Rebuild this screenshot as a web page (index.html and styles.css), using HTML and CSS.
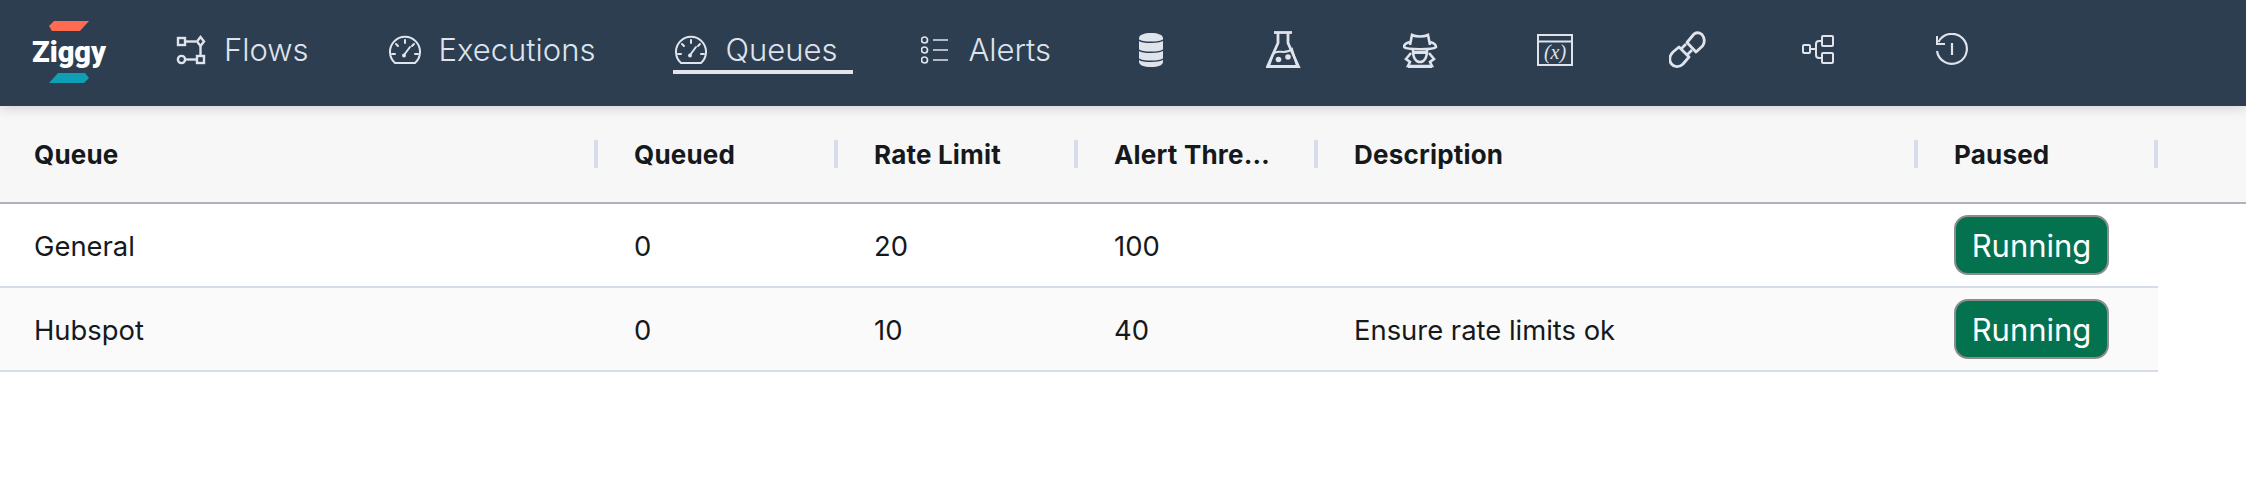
FILE: index.html
```html
<!DOCTYPE html>
<html lang="en">
<head>
<meta charset="utf-8">
<title>Ziggy Queues</title>
<link rel="stylesheet" href="styles.css">
</head>
<body>
<nav class="nav">
  <a class="logo">
    <svg class="logo-bar" width="40" height="10" viewBox="0 0 40 10"><path d="M5 0H40L31 10H3L0 5Z" fill="#ff6a50"/></svg>
    <span class="logo-text">Ziggy</span>
    <svg class="logo-bar" width="40" height="10" viewBox="0 0 40 10"><path d="M9 0H36L40 5L35 10H0Z" fill="#0e9fb5"/></svg>
  </a>
  <ul class="menu">
    <li class="item">
      <svg class="ico" width="31" height="30" viewBox="0 0 31 30"><g fill="none" stroke="#dfe3ec" stroke-width="2.400"><rect x="2" y="3" width="7" height="7"/><path d="M9 6.500H20"/><path d="M24.500 2L28 6.500L24.500 11L21 6.500Z"/><path d="M24.500 11V21"/><rect x="21" y="21" width="7" height="7"/><circle cx="5.500" cy="24.500" r="3.600"/><path d="M9 24.500H21"/></g></svg>
      <span class="label">Flows</span>
    </li>
    <li class="item">
      <svg class="ico" width="33" height="30" viewBox="0 0 33 30"><g fill="none" stroke="#dfe3ec" stroke-width="2"><path d="M6 28A15 15 0 1 1 26 28Z"/><path d="M16 5V8M7 9L9 11M3 19H6M26 19H29M25 9L23 11M15 20L21 12" stroke-linecap="round"/></g><circle cx="15" cy="20.500" r="2" fill="#dfe3ec"/></svg>
      <span class="label">Executions</span>
    </li>
    <li class="item active">
      <svg class="ico" width="33" height="30" viewBox="0 0 33 30"><g fill="none" stroke="#dfe3ec" stroke-width="2"><path d="M6 28A15 15 0 1 1 26 28Z"/><path d="M16 5V8M7 9L9 11M3 19H6M26 19H29M25 9L23 11M15 20L21 12" stroke-linecap="round"/></g><circle cx="15" cy="20.500" r="2" fill="#dfe3ec"/></svg>
      <span class="label">Queues</span>
    </li>
    <li class="item">
      <svg class="ico" width="30" height="30" viewBox="0 0 30 30"><g fill="none" stroke="#dfe3ec" stroke-width="1.700"><circle cx="3.500" cy="5" r="3"/><circle cx="3.500" cy="15" r="3"/><circle cx="3.500" cy="25" r="3"/><path d="M12 5H27M12 15H27M12 25H27"/></g></svg>
      <span class="label">Alerts</span>
    </li>
    <li class="item icon-only first">
      <svg width="31" height="36" viewBox="0 0 31 36"><path d="M0 6C0 3 5 1 12 1S24 3 24 6V30C24 33 19 35 12 35S0 33 0 30Z" fill="#dfe3ec"/><path d="M0 8C3 11 21 11 24 8M0 18C3 21 21 21 24 18M0 27C3 30 21 30 24 27" fill="none" stroke="#2c3e50" stroke-width="1.600"/></svg>
    </li>
    <li class="item icon-only">
      <svg width="41" height="38" viewBox="0 0 41 38"><g fill="none" stroke="#dfe3ec" stroke-width="2.800"><path d="M8 1.500H26"/><path d="M12 2V12L1.500 35.500H32.500L22 12V2"/></g><path d="M7 23C12 17 18 25 26 18L31 35H3Z" fill="none" stroke="#dfe3ec" stroke-width="2"/><circle cx="12.500" cy="28.500" r="2.800" fill="#dfe3ec"/><circle cx="22" cy="26" r="2.800" fill="#dfe3ec"/></svg>
    </li>
    <li class="item icon-only">
      <svg width="38" height="36" viewBox="0 0 38 36"><g fill="none" stroke="#dfe3ec" stroke-width="2.600"><path d="M7 13L9 3C13 5 21 5 25 3L27 13"/><path d="M7 10C3 11 1 13 1 15C3 18 31 18 33 15C33 13 31 11 27 10"/><path d="M8 21L3 27L7 30L5 34H29L27 30L31 27L26 21"/><path d="M10 18C10 26 13 30 17 30S24 26 24 18"/></g><path d="M11 19H23V22H11Z" fill="#dfe3ec"/><path d="M5 34.500H29" stroke="#dfe3ec" stroke-width="3"/></svg>
    </li>
    <li class="item icon-only">
      <svg width="36" height="32" viewBox="0 0 36 32"><rect x="1" y="1" width="34" height="30" fill="none" stroke="#dfe3ec" stroke-width="2"/><path d="M1 7.500H35" stroke="#dfe3ec" stroke-width="2"/><text class="var-text" x="18" y="25" text-anchor="middle">(x)</text></svg>
    </li>
    <li class="item icon-only">
      <svg width="37" height="38" viewBox="0 0 37 38"><g fill="none" stroke="#dfe3ec" stroke-width="2.800" stroke-linejoin="round"><path d="M18 11.500L25 3C29 0.500 33 2 34.500 6C36 10 35 13 33.500 15L27 21Z"/><path d="M10 16L20 26L14 33C10 37 5 36 2.500 33C0 30 0 25 4 21Z"/><path d="M12 18L17 13M18 24L23 19"/></g></svg>
    </li>
    <li class="item icon-only">
      <svg width="37" height="30" viewBox="0 0 37 30"><g fill="none" stroke="#dfe3ec" stroke-width="2"><rect x="1" y="10" width="7" height="8" rx="1"/><rect x="20" y="1" width="11" height="10" rx="1"/><rect x="20" y="18" width="11" height="10" rx="1"/><path d="M8 14H14M20 6H17Q14 6 14 9V20Q14 23 17 23H20"/></g></svg>
    </li>
    <li class="item icon-only">
      <svg width="34" height="34" viewBox="0 0 34 34"><g fill="none" stroke="#dfe3ec" stroke-width="2.200"><path d="M3.500 9A15 15 0 1 1 2 18"/><path d="M2 3V11H10" stroke-width="2"/><path d="M17 10V22"/></g></svg>
    </li>
  </ul>
</nav>
<main class="table">
  <div class="row head">
    <div class="th first-col"><span class="th-text">Queue</span></div>
    <div class="th"><span class="th-text">Queued</span></div>
    <div class="th"><span class="th-text">Rate Limit</span></div>
    <div class="th"><span class="th-text">Alert Threshold</span></div>
    <div class="th"><span class="th-text">Description</span></div>
    <div class="th"><span class="th-text">Paused</span></div>
  </div>
  <div class="row body">
    <div class="td first-col">General</div>
    <div class="td">0</div>
    <div class="td">20</div>
    <div class="td">100</div>
    <div class="td"></div>
    <div class="td"><button class="status">Running</button></div>
  </div>
  <div class="row body even">
    <div class="td first-col">Hubspot</div>
    <div class="td">0</div>
    <div class="td">10</div>
    <div class="td">40</div>
    <div class="td">Ensure rate limits ok</div>
    <div class="td"><button class="status">Running</button></div>
  </div>
</main>
</body>
</html>
```
FILE: styles.css
```css
* { box-sizing: border-box; }
html, body { margin: 0; padding: 0; background: #fff; }
body { font-family: Inter, "Liberation Sans", sans-serif; color: #16191c; overflow: hidden; }

.nav {
  position: relative;
  display: flex;
  align-items: flex-start;
  gap: 66px;
  height: 106px;
  padding: 21px 0 0 30px;
  background: #2c3e50;
  box-shadow: 0 2px 12px rgba(0, 0, 0, 0.16);
}
.logo {
  display: flex;
  flex-direction: column;
  align-items: center;
  justify-content: space-between;
  width: 78px;
  height: 62px;
}
.logo-bar { display: block; }
.logo-text {
  font-family: Roboto, sans-serif;
  font-weight: 900;
  font-size: 29px;
  line-height: 30px;
  color: #fff;
}
.menu {
  display: flex;
  gap: 62px;
  margin: 9px 0 0;
  padding: 0;
  list-style: none;
}
.item {
  display: flex;
  align-items: center;
  gap: 17px;
  height: 44px;
  padding: 0 16px 0 2px;
  border-bottom: 4px solid transparent;
}
.item.active { border-bottom-color: #e3e5ee; margin-right: 4px; }
.ico { display: block; flex: none; }
.label {
  font-family: Inter, sans-serif;
  font-weight: 300;
  font-size: 31px;
  line-height: 40px;
  color: #dfe3ec;
}
.icon-only { padding: 0; margin-left: 34px; }
.icon-only.first { margin-left: 10px; }
.var-text {
  font-family: "Liberation Serif", serif;
  font-style: italic;
  font-size: 20px;
  fill: #dfe3ec;
}

.row {
  display: grid;
  grid-template-columns: 598px 240px 240px 240px 600px 240px;
}
.head {
  height: 98px;
  padding-top: 34px;
  background: #f7f7f7;
  border-bottom: 2px solid #b0b3bd;
}
.th {
  height: 28px;
  padding: 0 36px;
  border-right: 4px solid #d6dde9;
  font-size: 26px;
  font-weight: 700;
  line-height: 30px;
  letter-spacing: 0.2px;
}
.th-text {
  display: block;
  overflow: hidden;
  white-space: nowrap;
  text-overflow: ellipsis;
}
.body {
  width: 2158px;
  height: 84px;
  border-bottom: 2px solid #d6dde9;
}
.even { background: #fafafa; }
.td {
  display: flex;
  align-items: center;
  padding: 2px 36px 0;
  font-size: 27.4px;
}
.first-col { padding-left: 34px; }
.status {
  width: 155px;
  height: 60px;
  margin-top: -2px;
  padding: 0;
  background: #04724f;
  border: 2px solid #8c8c8c;
  border-radius: 14px;
  color: #fff;
  font-family: Inter, "Liberation Sans", sans-serif;
  font-size: 31px;
}
```
